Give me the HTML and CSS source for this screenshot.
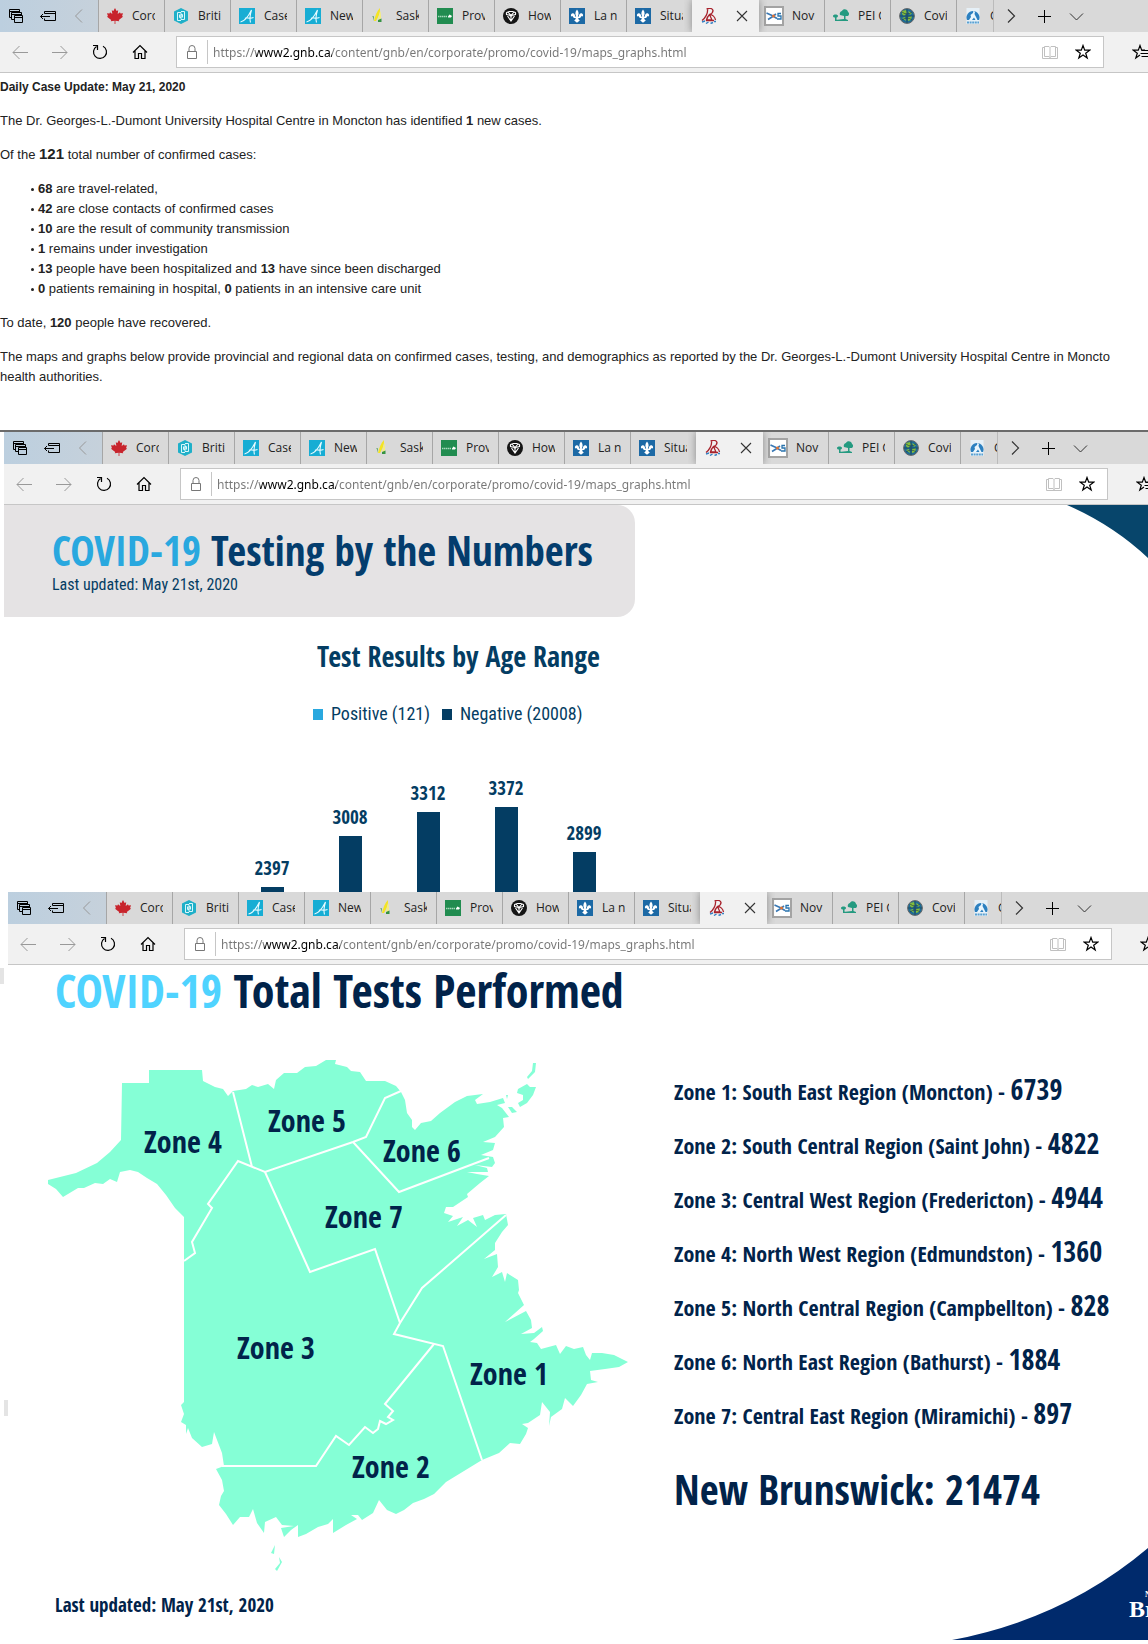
FILE: index.html
```
<!DOCTYPE html>
<html lang="en">
<head>
<meta charset="utf-8">
<meta name="viewport" content="width=device-width, initial-scale=1">
<title>COVID-19 maps and graphs</title>
<link rel="stylesheet" href="styles.css">
</head>
<body>

<svg class="sprite" aria-hidden="true">
  <symbol id="i-windows" viewBox="0 0 16 16"><path d="M3.500 9.500H1.500V1.500H11.500V4.500M1.500 3.500H11.500M6 11.500H3.500V4.500H13.500V7M3.500 6.500H13.500M6.500 7.500h8v7h-8zM6.500 9.500h8" fill="none" stroke="#000"/></symbol>
  <symbol id="i-aside" viewBox="0 0 16 16"><path d="M4.500 5.500V3.500h11v9h-11v-2M4.500 5.500h11M0.500 8.500h9.500M3 6L.5 8.500L3 11" fill="none" stroke="#000"/></symbol>
  <symbol id="i-prev" viewBox="0 0 16 16"><path d="M10 1.500L3.500 8L10 14.500" fill="none" stroke="#999"/></symbol>
  <symbol id="i-next" viewBox="0 0 16 16"><path d="M5 1.500L11.500 8L5 14.500" fill="none" stroke="#333" stroke-width="1.200"/></symbol>
  <symbol id="i-plus" viewBox="0 0 16 16"><path d="M8.500 2v13M2 8.500h13" fill="none" stroke="#000"/></symbol>
  <symbol id="i-down" viewBox="0 0 16 16"><path d="M1 5.500L7.500 12L14 5.500" fill="none" stroke="#333"/></symbol>
  <symbol id="i-close" viewBox="0 0 16 16"><path d="M3 3L13 13M13 3L3 13" fill="none" stroke="#333" stroke-width="1.100"/></symbol>
  <symbol id="i-back" viewBox="0 0 16 16"><path d="M16 8.500H1M7.500 2L1 8.500L7.500 15" fill="none" stroke="#999"/></symbol>
  <symbol id="i-fwd" viewBox="0 0 16 16"><path d="M0 8.500H15M8.500 2L15 8.500L8.500 15" fill="none" stroke="#999"/></symbol>
  <symbol id="i-reload" viewBox="0 0 16 16"><path d="M11 2.200A6.500 6.500 0 1 1 4.500 2.500M1 1.500h4.500V6" fill="none" stroke="#000" stroke-width="1.200"/></symbol>
  <symbol id="i-home" viewBox="0 0 16 16"><path d="M1 8.500L8 1.500L15 8.500M3 7V14.500H6.500V9.500H9.500V14.500H13V7" fill="none" stroke="#000" stroke-width="1.200"/></symbol>
  <symbol id="i-lock" viewBox="0 0 16 16"><path d="M3.500 7.500h9v7h-9zM5 7.500V4.500A3 3 0 0 1 11 4.500V7.500" fill="none" stroke="#777"/></symbol>
  <symbol id="i-book" viewBox="0 0 16 16"><path d="M2.500 2.500h4.500l1 1l1-1h4.500v10h-4.500l-1 1l-1-1h-4.500zM8 3.500v11M2.500 3.500h-2v11h15v-11h-2" fill="none" stroke="#c0c0c0"/></symbol>
  <symbol id="i-star" viewBox="0 0 16 16"><path d="M8 1.500L9.700 6.200H14.800L10.700 9.200L12.200 14L8 11.100L3.800 14L5.300 9.200L1.200 6.200H6.300Z" fill="none" stroke="#000" stroke-width="1.200"/></symbol>
  <symbol id="i-favs" viewBox="0 0 24 16"><path d="M13 6.200H9.700L8 1.500L6.300 6.200H1.200L5.300 9.200L3.800 14L8 11.100M9.500 6.500H24M8.500 9.500H24M9.500 12.500H24" fill="none" stroke="#000" stroke-width="1.200"/></symbol>

  <symbol id="f-leaf" viewBox="0 0 16 16"><path d="M8 0L9.600 3L11.200 2.300L10.700 6L13 4.300L13.500 5.600L16 5.300L15.100 8L16 8.700L11.800 12L12.200 13.200L8.400 12.700V16H7.600V12.700L3.800 13.200L4.200 12L0 8.700L.9 8L0 5.300L2.500 5.600L3 4.300L5.300 6L4.800 2.300L6.400 3Z" fill="#c8242c"/></symbol>
  <symbol id="f-hex" viewBox="0 0 16 16"><path d="M8 0L15 3.500V12.500L8 16L1 12.500V3.500Z" fill="#1fb0c9"/><path d="M8 12.500H4.500V4.500H8V9.500H6.500V6.500M8 3.500H11.500V11.500H8V6.500H9.500V9.500" fill="none" stroke="#d8f7fb" stroke-width="1"/></symbol>
  <symbol id="f-alberta" viewBox="0 0 16 16"><path d="M0 0h16v16H0z" fill="#17add4"/><path d="M1.500 14C5 13.500 9.500 8 12.500 2C11 7 10.500 11 11.500 14.500M6 10.500C8 8.500 9.500 11.500 14.500 9.500" fill="none" stroke="#e8fbff" stroke-width="1.100"/></symbol>
  <symbol id="f-sask" viewBox="0 0 16 16"><path d="M3 13C4 8 6 3 9 0C9.500 4 7.500 9 5 13Z" fill="#f4e423"/><path d="M7 14C8 9 8 6 9.500 3L10 9L9 14Z" fill="#f7ef7a"/><path d="M1.500 8L2.500 8L3 13ZM7 12L10.500 10.500V14H7Z" fill="#369344"/></symbol>
  <symbol id="f-manitoba" viewBox="0 0 16 16"><path d="M0 0h16v16H0z" fill="#218c50"/><path d="M1 8.500h9" fill="none" stroke="#a6d9bb" stroke-width="1.500" stroke-dasharray="1.500 .5"/><path d="M11 8.500L12.500 6.500L15 8L14 9.500H11Z" fill="#fff"/></symbol>
  <symbol id="f-ontario" viewBox="0 0 16 16"><circle cx="8" cy="8" r="8" fill="#151515"/><path d="M8 7.500L5 4Q3 4 3.500 6.500ZM8 7.500L11 4Q13 4 12.500 6.500ZM4.500 8L8 13L11.500 8M8 8V13M5.500 3.500H10.500" fill="none" stroke="#fff" stroke-width="1.100"/></symbol>
  <symbol id="f-quebec" viewBox="0 0 16 16"><path d="M0 0h16v16H0z" fill="#1c69a5"/><path d="M8 1.500C10 4 10 6 8.800 8.500H10C9.500 5.500 12.500 4 14 6.500C14.500 8.500 13 9 12.500 8C12 9 11.500 9.500 11 10H9.200C9.500 11.500 10 12 10.800 12.500L8 14.800L5.200 12.500C6 12 6.500 11.500 6.800 10H5C4.500 9.500 4 9 3.500 8C3 9 1.500 8.500 2 6.500C3.500 4 6.500 5.500 6 8.500H7.200C6 6 6 4 8 1.500Z" fill="#fff"/></symbol>
  <symbol id="f-nb" viewBox="0 0 16 16"><path d="M5.500 1C8 0 11.500 0 12 2.500C12 4.500 10 6 8.500 6.500C11.500 6.500 14 9 14.500 12M6.500 1.500C7 5 4.500 10 1 12.500M8.500 6.500C7 8 6 10 5.500 12H11L8.500 6.500M5 12.500H13" fill="none" stroke="#a8222c" stroke-width="1.300"/><path d="M1 14L4 13M5 15.500L7.500 14M9.500 15.500L12 14.500M13 13.500h2" fill="none" stroke="#347fc2" stroke-width="1.400"/></symbol>
  <symbol id="f-ns" viewBox="0 0 20 20"><path d="M1 1h18v18H1z" fill="#fff" stroke="#a3a3a3" stroke-width="2"/><path d="M2.500 7L8 9.500L13 12.500M4 13.500L8 11L12 8" fill="none" stroke="#3978b4" stroke-width="1.600"/><path d="M17 7.500h-3v2.500h3v3h-4" fill="none" stroke="#2873ad" stroke-width="1.300"/><circle cx="9.500" cy="10" r="1.500" fill="#e07333"/></symbol>
  <symbol id="f-pei" viewBox="0 0 16 16"><path d="M7 7C6 5 8 3 9 3C10 0 15 1 15 4C17 5 16 8 14 8H12.500V11L15 12V13H2V12L11 11V8ZM0 8C0 6 5 6 5 8C5 9.500 3.500 9.500 3.500 9.500V12H2V9.500C1 9.500 0 9 0 8Z" fill="#249a80"/></symbol>
  <symbol id="f-globe" viewBox="0 0 16 16"><circle cx="8" cy="8" r="7.400" fill="#1d6c96" stroke="#666"/><path d="M3 3L7 2L8 5L5 8L3 6ZM9 3L13 5L11 7ZM9 9L13 8L12 12L9 13ZM3 10L6 9L7 13Z" fill="#83bd3c"/><path d="M1 8H15M8 1V15M3 4Q8 8 13 4M3 12Q8 8 13 12" fill="none" stroke="#24404d" stroke-width=".7"/></symbol>
  <symbol id="f-bear" viewBox="0 0 16 16"><path d="M1.500 0h13v16h-13z" fill="#e6f0f7"/><path d="M2 12A6.500 6.500 0 1 1 14 12Z" fill="#2c80c0"/><path d="M4 12L6 9L5.500 7L8 5L8.500 2.500L10 4L9.500 6L11 9L12.500 12H10.500L9 9.500L7 12Z" fill="#eaf6fd"/><path d="M2 14.500h12" stroke="#5ba1d2" stroke-width="2" stroke-dasharray="2 .6"/></symbol>
</svg>

<main class="stack">

<section class="shot shot-update">
  <header class="chrome">
    <nav class="tabs" aria-label="Tabs">
      <div class="tab-tools">
        <button aria-label="Tabs set aside"><svg><use href="#i-windows"/></svg></button>
        <button aria-label="Set tabs aside"><svg><use href="#i-aside"/></svg></button>
        <button aria-label="Previous tabs"><svg><use href="#i-prev"/></svg></button>
      </div>
      <a class="tab" href="#"><svg><use href="#f-leaf"/></svg><span>Coro</span></a>
      <a class="tab" href="#"><svg><use href="#f-hex"/></svg><span>Briti</span></a>
      <a class="tab" href="#"><svg><use href="#f-alberta"/></svg><span>Case</span></a>
      <a class="tab" href="#"><svg><use href="#f-alberta"/></svg><span>New</span></a>
      <a class="tab" href="#"><svg><use href="#f-sask"/></svg><span>Sask</span></a>
      <a class="tab" href="#"><svg><use href="#f-manitoba"/></svg><span>Prov</span></a>
      <a class="tab" href="#"><svg><use href="#f-ontario"/></svg><span>How</span></a>
      <a class="tab" href="#"><svg><use href="#f-quebec"/></svg><span>La n</span></a>
      <a class="tab" href="#"><svg><use href="#f-quebec"/></svg><span>Situa</span></a>
      <div class="tab tab-active"><svg><use href="#f-nb"/></svg><button aria-label="Close tab"><svg><use href="#i-close"/></svg></button></div>
      <a class="tab tab-framed" href="#"><svg><use href="#f-ns"/></svg><span>Nov</span></a>
      <a class="tab" href="#"><svg><use href="#f-pei"/></svg><span>PEI G</span></a>
      <a class="tab" href="#"><svg><use href="#f-globe"/></svg><span>Covi</span></a>
      <a class="tab tab-cut" href="#"><svg><use href="#f-bear"/></svg><span>G</span></a>
      <div class="tab-more">
        <button aria-label="Next tabs"><svg><use href="#i-next"/></svg></button>
        <button aria-label="New tab"><svg><use href="#i-plus"/></svg></button>
        <button aria-label="Tab previews"><svg><use href="#i-down"/></svg></button>
      </div>
    </nav>
    <div class="toolbar">
      <button aria-label="Back"><svg><use href="#i-back"/></svg></button>
      <button aria-label="Forward"><svg><use href="#i-fwd"/></svg></button>
      <button aria-label="Refresh"><svg><use href="#i-reload"/></svg></button>
      <button aria-label="Home"><svg><use href="#i-home"/></svg></button>
      <div class="address">
        <svg class="lock"><use href="#i-lock"/></svg>
        <input type="text" aria-label="Address" value="https://www2.gnb.ca/content/gnb/en/corporate/promo/covid-19/maps_graphs.html">
        <button aria-label="Reading view"><svg><use href="#i-book"/></svg></button>
        <button aria-label="Add to favorites"><svg><use href="#i-star"/></svg></button>
      </div>
      <button class="hub" aria-label="Favorites"><svg class="wide"><use href="#i-favs"/></svg></button>
    </div>
  </header>
  <article class="update">
    <h1>Daily Case Update: May 21, 2020</h1>
    <p>The Dr. Georges-L.-Dumont University Hospital Centre in Moncton has identified <b>1</b> new cases.</p>
    <p>Of the <b class="big">121</b> total number of confirmed cases:</p>
    <ul>
      <li><b>68</b> are travel-related,</li>
      <li><b>42</b> are close contacts of confirmed cases</li>
      <li><b>10</b> are the result of community transmission</li>
      <li><b>1</b> remains under investigation</li>
      <li><b>13</b> people have been hospitalized and <b>13</b> have since been discharged</li>
      <li><b>0</b> patients remaining in hospital, <b>0</b> patients in an intensive care unit</li>
    </ul>
    <p>To date, <b>120</b> people have recovered.</p>
    <p class="long">The maps and graphs below provide provincial and regional data on confirmed cases, testing, and demographics as reported by the Dr. Georges-L.-Dumont University Hospital Centre in Moncto<br>health authorities.</p>
  </article>
</section>

<section class="shot shot-testing">
  <header class="chrome">
    <nav class="tabs" aria-label="Tabs">
      <div class="tab-tools">
        <button aria-label="Tabs set aside"><svg><use href="#i-windows"/></svg></button>
        <button aria-label="Set tabs aside"><svg><use href="#i-aside"/></svg></button>
        <button aria-label="Previous tabs"><svg><use href="#i-prev"/></svg></button>
      </div>
      <a class="tab" href="#"><svg><use href="#f-leaf"/></svg><span>Coro</span></a>
      <a class="tab" href="#"><svg><use href="#f-hex"/></svg><span>Briti</span></a>
      <a class="tab" href="#"><svg><use href="#f-alberta"/></svg><span>Case</span></a>
      <a class="tab" href="#"><svg><use href="#f-alberta"/></svg><span>New</span></a>
      <a class="tab" href="#"><svg><use href="#f-sask"/></svg><span>Sask</span></a>
      <a class="tab" href="#"><svg><use href="#f-manitoba"/></svg><span>Prov</span></a>
      <a class="tab" href="#"><svg><use href="#f-ontario"/></svg><span>How</span></a>
      <a class="tab" href="#"><svg><use href="#f-quebec"/></svg><span>La n</span></a>
      <a class="tab" href="#"><svg><use href="#f-quebec"/></svg><span>Situa</span></a>
      <div class="tab tab-active"><svg><use href="#f-nb"/></svg><button aria-label="Close tab"><svg><use href="#i-close"/></svg></button></div>
      <a class="tab tab-framed" href="#"><svg><use href="#f-ns"/></svg><span>Nov</span></a>
      <a class="tab" href="#"><svg><use href="#f-pei"/></svg><span>PEI G</span></a>
      <a class="tab" href="#"><svg><use href="#f-globe"/></svg><span>Covi</span></a>
      <a class="tab tab-cut" href="#"><svg><use href="#f-bear"/></svg><span>G</span></a>
      <div class="tab-more">
        <button aria-label="Next tabs"><svg><use href="#i-next"/></svg></button>
        <button aria-label="New tab"><svg><use href="#i-plus"/></svg></button>
        <button aria-label="Tab previews"><svg><use href="#i-down"/></svg></button>
      </div>
    </nav>
    <div class="toolbar">
      <button aria-label="Back"><svg><use href="#i-back"/></svg></button>
      <button aria-label="Forward"><svg><use href="#i-fwd"/></svg></button>
      <button aria-label="Refresh"><svg><use href="#i-reload"/></svg></button>
      <button aria-label="Home"><svg><use href="#i-home"/></svg></button>
      <div class="address">
        <svg class="lock"><use href="#i-lock"/></svg>
        <input type="text" aria-label="Address" value="https://www2.gnb.ca/content/gnb/en/corporate/promo/covid-19/maps_graphs.html">
        <button aria-label="Reading view"><svg><use href="#i-book"/></svg></button>
        <button aria-label="Add to favorites"><svg><use href="#i-star"/></svg></button>
      </div>
      <button class="hub" aria-label="Favorites"><svg class="wide"><use href="#i-favs"/></svg></button>
    </div>
  </header>
  <div class="testing">
    <svg class="swoosh-top" viewBox="0 0 81 53" aria-hidden="true"><path d="M0 0Q46 20 81 53V0Z" fill="#07456b"/></svg>
    <div class="banner">
      <h2><span>COVID-19</span> Testing by the Numbers</h2>
      <p>Last updated: May 21st, 2020</p>
    </div>
    <figure class="chart">
      <figcaption>Test Results by Age Range</figcaption>
      <ul class="legend">
        <li class="positive">Positive (121)</li>
        <li class="negative">Negative (20008)</li>
      </ul>
      <div class="plot">
        <div class="col"><span>2397</span><i style="height:5px"></i></div>
        <div class="col"><span>3008</span><i style="height:56px"></i></div>
        <div class="col"><span>3312</span><i style="height:80px"></i></div>
        <div class="col"><span>3372</span><i style="height:85px"></i></div>
        <div class="col"><span>2899</span><i style="height:40px"></i></div>
      </div>
    </figure>
  </div>
</section>

<section class="shot shot-total">
  <header class="chrome">
    <nav class="tabs" aria-label="Tabs">
      <div class="tab-tools">
        <button aria-label="Tabs set aside"><svg><use href="#i-windows"/></svg></button>
        <button aria-label="Set tabs aside"><svg><use href="#i-aside"/></svg></button>
        <button aria-label="Previous tabs"><svg><use href="#i-prev"/></svg></button>
      </div>
      <a class="tab" href="#"><svg><use href="#f-leaf"/></svg><span>Coro</span></a>
      <a class="tab" href="#"><svg><use href="#f-hex"/></svg><span>Briti</span></a>
      <a class="tab" href="#"><svg><use href="#f-alberta"/></svg><span>Case</span></a>
      <a class="tab" href="#"><svg><use href="#f-alberta"/></svg><span>New</span></a>
      <a class="tab" href="#"><svg><use href="#f-sask"/></svg><span>Sask</span></a>
      <a class="tab" href="#"><svg><use href="#f-manitoba"/></svg><span>Prov</span></a>
      <a class="tab" href="#"><svg><use href="#f-ontario"/></svg><span>How</span></a>
      <a class="tab" href="#"><svg><use href="#f-quebec"/></svg><span>La n</span></a>
      <a class="tab" href="#"><svg><use href="#f-quebec"/></svg><span>Situa</span></a>
      <div class="tab tab-active"><svg><use href="#f-nb"/></svg><button aria-label="Close tab"><svg><use href="#i-close"/></svg></button></div>
      <a class="tab tab-framed" href="#"><svg><use href="#f-ns"/></svg><span>Nov</span></a>
      <a class="tab" href="#"><svg><use href="#f-pei"/></svg><span>PEI G</span></a>
      <a class="tab" href="#"><svg><use href="#f-globe"/></svg><span>Covi</span></a>
      <a class="tab tab-cut" href="#"><svg><use href="#f-bear"/></svg><span>G</span></a>
      <div class="tab-more">
        <button aria-label="Next tabs"><svg><use href="#i-next"/></svg></button>
        <button aria-label="New tab"><svg><use href="#i-plus"/></svg></button>
        <button aria-label="Tab previews"><svg><use href="#i-down"/></svg></button>
      </div>
    </nav>
    <div class="toolbar">
      <button aria-label="Back"><svg><use href="#i-back"/></svg></button>
      <button aria-label="Forward"><svg><use href="#i-fwd"/></svg></button>
      <button aria-label="Refresh"><svg><use href="#i-reload"/></svg></button>
      <button aria-label="Home"><svg><use href="#i-home"/></svg></button>
      <div class="address">
        <svg class="lock"><use href="#i-lock"/></svg>
        <input type="text" aria-label="Address" value="https://www2.gnb.ca/content/gnb/en/corporate/promo/covid-19/maps_graphs.html">
        <button aria-label="Reading view"><svg><use href="#i-book"/></svg></button>
        <button aria-label="Add to favorites"><svg><use href="#i-star"/></svg></button>
      </div>
      <button class="hub" aria-label="Favorites"><svg class="wide"><use href="#i-favs"/></svg></button>
    </div>
  </header>
  <div class="total">
    <h2><span>COVID-19</span> Total Tests Performed</h2>
    <div class="total-body">
      <svg class="map" viewBox="40 1050 600 530" role="img" aria-label="New Brunswick health zones">
        <g fill="#85ffd6">
          <path d="M48 1180L76 1173L97 1163L110 1152L121 1140L122 1083H149V1070H202L203 1081L215 1087L223 1089L228 1096L233 1091L246 1089L252 1085L258 1087L268 1084L274 1089L276 1080L284 1073L297 1073L305 1067L316 1066L326 1060H336L335 1064L347 1067L351 1071L360 1072L366 1081H385L396 1086L401 1092L405 1100L407 1113L412 1120V1127L415 1130L421 1123L431 1121L440 1113L455 1102L467 1096L483 1094L475 1100L477 1104L490 1102L503 1098L505 1103L497 1105L502 1108L509 1117L503 1118L504 1127L495 1137L483 1142L495 1143L493 1150L481 1155L493 1157L495 1163L492 1167L475 1165L487 1168L488 1172L467 1172L477 1174L489 1176L480 1183L467 1194L468 1197L453 1207L446 1207L444 1213L453 1216L448 1222L463 1217L457 1226L468 1220L477 1227L473 1218L483 1215L485 1220L495 1215L506 1214L508 1225L502 1232L495 1243V1250L484 1259L497 1254L498 1267L492 1277L502 1272L505 1282L507 1273L518 1280L519 1290L518 1293L524 1305L505 1322L526 1311L531 1320L532 1328L521 1334L534 1333L542 1327L543 1331L534 1339L530 1342L537 1343L541 1349L556 1345L560 1354L566 1346L574 1349L583 1347L586 1355L590 1360L592 1353L602 1353L614 1355L628 1362L619 1367L605 1369L590 1371L591 1380L598 1382L587 1384L581 1395L573 1406L565 1398L562 1409L551 1417L549 1426L550 1412L542 1402L540 1415L528 1423L522 1424L528 1428L526 1434L520 1444L510 1443L499 1453L482 1460L464 1471L446 1482L434 1494L424 1499L413 1503L404 1510L396 1514L387 1510L379 1500L373 1513L362 1520L358 1515L351 1515L357 1519L346 1525L333 1533V1519L328 1524L318 1527L306 1534L298 1537V1525L291 1530L284 1537L281 1528L294 1526L282 1525L276 1517L265 1522L264 1533L257 1523L253 1509L249 1517H240L233 1525L226 1514L219 1505L221 1496L224 1491L222 1480L216 1469L224 1466L222 1453L214 1432L212 1444L202 1447L192 1438L188 1428L186 1434L186 1425L181 1422L184 1414L181 1405L184 1402V1217L175 1208L166 1195L157 1184L147 1178L138 1172L130 1170L120 1172L117 1182L110 1179L103 1184L95 1183L84 1188L78 1188L63 1197L56 1189L48 1184Z"/>
          <path d="M533 1063H536L535 1072L528 1079L527 1077L532 1071ZM518 1089L527 1084L530 1087L536 1087L533 1095L527 1103L520 1107L518 1103L523 1100L523 1095L517 1093ZM508 1107H512L517 1112L512 1113ZM506 1095h2l-1 4ZM275 1545L274 1554L271 1553ZM279 1557L282 1562L277 1571L275 1569L280 1563Z"/>
        </g>
        <g fill="none" stroke="#fff" stroke-width="2">
          <path d="M233 1092L252 1167M184 1261L195 1253L192 1242L212 1208L208 1204L238 1161L265 1172L353 1142L366 1137L385 1098L401 1091"/>
          <path d="M353 1142L399 1192L489 1158M265 1172L310 1272L375 1249L400 1323M506 1215L422 1288L400 1323L394 1334L443 1346L482 1460"/>
          <path d="M434 1344L385 1404L393 1411L388 1417L393 1420L386 1424L380 1421L378 1429L373 1433L365 1427L349 1445L336 1436L316 1466H222"/>
        </g>
        <g class="zone">
          <text x="183" y="1153">Zone 4</text>
          <text x="307" y="1132">Zone 5</text>
          <text x="422" y="1162">Zone 6</text>
          <text x="364" y="1228">Zone 7</text>
          <text x="276" y="1359">Zone 3</text>
          <text x="509" y="1385">Zone 1</text>
          <text x="391" y="1478">Zone 2</text>
        </g>
      </svg>
      <div class="figures">
        <ul>
          <li>Zone 1: South East Region (Moncton) - <b>6739</b></li>
          <li>Zone 2: South Central Region (Saint John) - <b>4822</b></li>
          <li>Zone 3: Central West Region (Fredericton) - <b>4944</b></li>
          <li>Zone 4: North West Region (Edmundston) - <b>1360</b></li>
          <li>Zone 5: North Central Region (Campbellton) - <b>828</b></li>
          <li>Zone 6: North East Region (Bathurst) - <b>1884</b></li>
          <li>Zone 7: Central East Region (Miramichi) - <b>897</b></li>
        </ul>
        <p>New Brunswick: 21474</p>
      </div>
    </div>
    <p class="stamp">Last updated: May 21st, 2020</p>
    <div class="corner">
      <svg viewBox="0 0 196 92" aria-hidden="true"><path d="M0 92Q112 71 196 0V92Z" fill="#002a6c"/></svg>
      <p class="wordmark"><small>N</small>Br</p>
    </div>
  </div>
</section>

</main>
</body>
</html>
```

FILE: styles.css
```
* { box-sizing: border-box; }

body {
  margin: 0;
  overflow-x: hidden;
  background: #fff;
  color: #222;
  font-family: "Liberation Sans", Arial, sans-serif;
  font-size: 13px;
  line-height: 20px;
}

h1, h2, p, ul, figure { margin: 0; padding: 0; }
ul { list-style: none; }
button {
  display: flex;
  align-items: center;
  justify-content: center;
  margin: 0;
  padding: 0;
  border: 0;
  background: none;
}

.sprite { position: absolute; width: 0; height: 0; }
.stack { overflow: hidden; padding-bottom: 4px; }
.shot { width: 100%; background: #fff; }
.shot-testing { position: relative; border-top: 2px solid #6b6b6b; }
.shot-testing > * { margin-left: 4px; margin-right: -4px; }
.shot-total { position: relative; }
.shot-total > * { margin-left: 8px; margin-right: -8px; }

/* scroll bar slivers at the left edge */
.shot-total::before,
.shot-total::after {
  content: "";
  position: absolute;
  margin: 0;
  width: 4px;
  height: 16px;
  background: #e4e4e4;
}
.shot-total::before { left: 0; top: 76px; }
.shot-total::after { left: 4px; top: 508px; }

/* browser chrome */
.tabs {
  display: flex;
  height: 32px;
  background: linear-gradient(90deg, #bccfdf 0, #c6d1db 98px, #d9d9d9 99px);
}
.tabs svg, .toolbar svg { display: block; flex: none; width: 16px; height: 16px; }
.tab-tools { display: flex; width: 98px; }
.tab-tools button { width: 32px; }
.tab {
  display: flex;
  align-items: center;
  flex: none;
  width: 66px;
  padding-left: 8px;
  border-left: 1px solid #a6a6a6;
  color: #222;
  font-family: "Open Sans", "Noto Sans", sans-serif;
  font-size: 12px;
  text-decoration: none;
}
.tab span { width: 23px; margin-left: 9px; overflow: hidden; white-space: nowrap; }
.tab-active { width: 67px; background: #f1f1f1; border-color: #f1f1f1; box-shadow: 0 0 8px #888; clip-path: inset(0 -8px); }
.tab-active button { margin-left: 17px; }
.tab-framed { width: 65px; padding-left: 5px; border: 0; }
.tabs .tab-framed svg { width: 20px; height: 20px; }
.tab-framed span { margin-left: 8px; }
.tab-cut { width: 38px; border-right: 1px solid #bbb; }
.tab-cut span { width: 4px; }
.tab-more { display: flex; }
.tab-more button { width: 33px; }

.toolbar {
  display: flex;
  align-items: center;
  height: 41px;
  background: #f1f1f1;
  border-bottom: 1px solid #c6c6c6;
}
.toolbar > button { width: 40px; height: 32px; }
.address {
  display: flex;
  align-items: center;
  flex: 1;
  height: 32px;
  margin-left: 16px;
  padding-left: 7px;
  border: 1px solid #c6c6c6;
  background: #fff;
}
.address input {
  flex: 1;
  min-width: 0;
  height: 24px;
  margin-left: 7px;
  padding: 0 0 0 5px;
  border: 0;
  border-left: 1px solid #c6c6c6;
  background: linear-gradient(90deg, #767676 48px, #000 48px, #000 124px, #767676 124px);
  background-clip: text;
  color: transparent;
  font-family: "Noto Sans", "Open Sans", sans-serif;
  font-size: 12px;
}
.address button { width: 33px; height: 30px; }
.address button:last-child { margin-right: 4px; }
.toolbar .hub { width: 44px; justify-content: flex-end; overflow: hidden; }
.toolbar .wide { width: 24px; margin-right: -8px; }

/* daily update */
.update { padding: 4px 0 43px; }
.update h1 { font-size: 12px; line-height: 20px; }
.update p, .update ul { margin-top: 14px; }
.update .big { font-size: 15px; line-height: 1; }
.update ul { padding-left: 31px; }
.update li { display: flex; align-items: center; white-space: pre; }
.update li::before { content: ""; width: 3px; height: 3px; margin-right: 4px; border-radius: 50%; background: #222; }
.long { white-space: nowrap; }

/* testing by the numbers */
.testing, .total {
  position: relative;
  font-family: "Open Sans Condensed", "Roboto Condensed", sans-serif;
  font-weight: 700;
}
.testing { color: #043d63; }
.swoosh-top { position: absolute; top: 0; right: 4px; width: 81px; height: 53px; }
.banner {
  width: 55%;
  padding: 21px 16px 22px 48px;
  border-radius: 0 18px 18px 0;
  background: #e5e3e4;
}
.banner h2 { color: #043d6d; font-size: 41px; line-height: 48px; white-space: nowrap; }
.banner h2 span { color: #29a8df; }
.banner p, .legend { font-family: "Roboto Condensed", "Open Sans Condensed", sans-serif; font-weight: 400; }
.banner p { margin-top: 1px; font-size: 16px; line-height: 20px; }
.chart { padding: 21px 0 0 229px; }
.chart figcaption { padding-left: 84px; font-size: 28px; line-height: 36px; }
.legend { display: flex; gap: 12px; margin-top: 28px; padding-left: 80px; font-size: 18px; line-height: 24px; }
.legend li { display: flex; align-items: center; gap: 8px; }
.legend li::before { content: ""; width: 10px; height: 11px; background: #043d63; }
.legend .positive::before { background: #29a8df; }
.plot { display: flex; align-items: flex-end; height: 166px; }
.col { display: flex; flex-direction: column; align-items: center; width: 78px; font-size: 19px; line-height: 24px; }
.col i { width: 23px; margin-top: 7px; background: #043d63; }

/* total tests */
.total { padding: 1px 8px 23px 32px; color: #01234a; }
.total h2 { padding-left: 15px; font-size: 46px; line-height: 48px; white-space: nowrap; }
.total h2 span { color: #4fd3ff; }
.total-body { display: flex; gap: 34px; margin-top: 36px; }
.map { display: block; flex: none; width: 600px; height: 530px; }
.zone { font-size: 30px; text-anchor: middle; fill: #01234a; }
.figures { flex: 1; padding-top: 14px; }
.figures li { font-size: 22px; line-height: 54px; white-space: nowrap; }
.figures li b { font-size: 28px; line-height: 1; }
.figures p { margin-top: 19px; font-size: 41px; line-height: 56px; }
.stamp { margin-top: 13px; padding-left: 15px; font-size: 19px; line-height: 24px; }
.corner { position: absolute; right: 8px; bottom: 0; width: 196px; height: 92px; overflow: hidden; }
.corner svg { display: block; width: 196px; height: 92px; }
.wordmark {
  position: absolute;
  left: 177px;
  bottom: 21px;
  color: #fff;
  font-family: "Liberation Serif", serif;
  font-size: 24px;
  line-height: 20px;
  white-space: nowrap;
}
.wordmark small { display: block; padding-left: 16px; font-size: 8px; line-height: 8px; }
```
